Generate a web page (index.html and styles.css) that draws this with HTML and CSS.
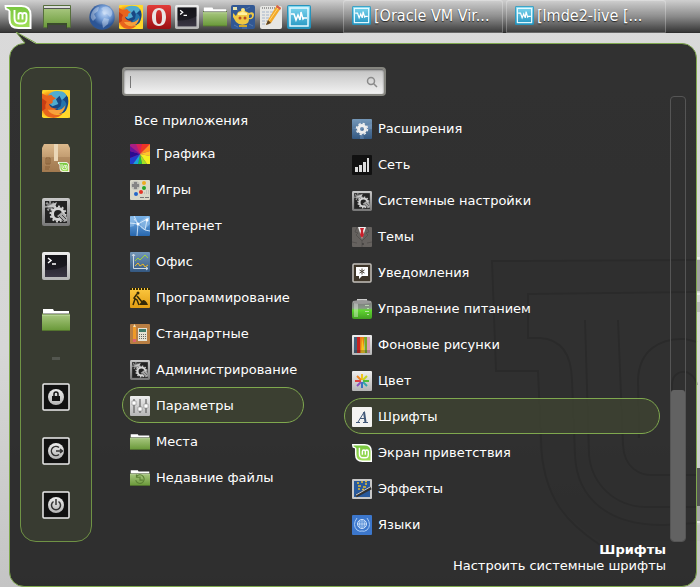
FILE: index.html
```html
<!DOCTYPE html>
<html lang="ru">
<head>
<meta charset="utf-8">
<title>Меню</title>
<link rel="stylesheet" href="styles.css">
</head>
<body>
<svg class="defs" width="0" height="0" aria-hidden="true">
  <defs>
    <linearGradient id="green" x2="0" y2="1"><stop stop-color="#a5c57c"/><stop offset="1" stop-color="#6b9a3b"/></linearGradient>
    <linearGradient id="silver" x2="0" y2="1"><stop stop-color="#eee"/><stop offset="1" stop-color="#b5b5b5"/></linearGradient>
    <linearGradient id="steel" x2="0" y2="1"><stop stop-color="#c8c8c8"/><stop offset="1" stop-color="#777"/></linearGradient>
    <linearGradient id="sky" x2="0" y2="1"><stop stop-color="#80d8f0"/><stop offset="1" stop-color="#2798c4"/></linearGradient>
    <linearGradient id="blue" x2="0" y2="1"><stop stop-color="#78b2e8"/><stop offset="1" stop-color="#2867ae"/></linearGradient>
    <linearGradient id="slate" x2="0" y2="1"><stop stop-color="#7497b8"/><stop offset="1" stop-color="#345881"/></linearGradient>
    <linearGradient id="red" x2="0" y2="1"><stop stop-color="#e23c39"/><stop offset="1" stop-color="#9c0f13"/></linearGradient>
    <linearGradient id="dark" x2="0" y2="1"><stop stop-color="#18181c"/><stop offset="1" stop-color="#3a3644"/></linearGradient>
    <linearGradient id="box" x2="0" y2="1"><stop stop-color="#dcb98c"/><stop offset="1" stop-color="#a67d52"/></linearGradient>
    <linearGradient id="amber" x2="0" y2="1"><stop stop-color="#fcc840"/><stop offset="1" stop-color="#e19c12"/></linearGradient>
    <linearGradient id="mintfill" x2="0" y2="1"><stop stop-color="#78c63f"/><stop offset="1" stop-color="#a2df58"/></linearGradient>
    <linearGradient id="battery" x2="0" y2="1"><stop stop-color="#777"/><stop offset=".4" stop-color="#8a988a"/><stop offset=".5" stop-color="#62d832"/><stop offset="1" stop-color="#419d22"/></linearGradient>
    <radialGradient id="ball" cx=".6" cy=".35"><stop stop-color="#c4daf7"/><stop offset=".5" stop-color="#7ba3da"/><stop offset="1" stop-color="#2c5595"/></radialGradient>
    <radialGradient id="flame" cx=".3" cy=".5"><stop stop-color="#ea5516"/><stop offset=".65" stop-color="#f48612"/><stop offset="1" stop-color="#ffd92b"/></radialGradient>

    <symbol id="mint" viewBox="0 0 27 24">
      <path d="M0 0H17Q27 0 27 10V24H14Q4 24 4 14V6Q3 5 1 5Q0 3 0 0Z" fill="#fff"/>
      <path d="M2 2H17Q25 2 25 10V22H14Q6 22 6 14V6Q5 4 2 3Z" fill="url(#mintfill)"/>
      <path d="M10 5V13Q10 18.500 15 18.500H18Q22 18.500 22 14V10Q22 8 20 8T18 10V14.500M18 10Q18 8 16 8T14 10V14.500" fill="none" stroke="#fff" stroke-width="1.900"/>
    </symbol>
    <symbol id="desktop" viewBox="0 0 30 24">
      <rect x="1" width="28" height="23" rx="1" fill="#566f3c"/><path d="M2 1H28V3H2Z" fill="#ddd"/><path d="M2 3H28V4H2Z" fill="#555"/>
      <path d="M2 4H28V22H2Z" fill="url(#green)"/><path d="M5 18H25V24H5Z" fill="#3a4c2c"/><path d="M6 20H24V24H6Z" fill="#444"/>
    </symbol>
    <symbol id="globe" viewBox="0 0 26 26">
      <circle cx="13" cy="13" r="12.700" fill="url(#ball)"/>
      <path d="M14 3Q20 1 23 7Q24 11 21 13L18 10L15 11Q12 8 14 6L12 5ZM3 8Q6 3 10 3L9 7L5 10L7 14L4 17Q0 13 3 8ZM15 14L20 15L19 20L14 24L13 18Z" fill="#e4eefb" opacity=".4"/>
    </symbol>
    <symbol id="firefox" viewBox="0 0 24 24">
      <rect width="24" height="24" rx="1.500" fill="url(#flame)"/>
      <circle cx="14" cy="11" r="9.500" fill="#194682"/>
      <path d="M5 5Q8 0 15 1Q20 1 21 5L17 9L15 5L12 8L14 12L9 14L5 11Z" fill="#50acd0"/>
      <path d="M17 8Q20 9 21 12Q20 18 16 19L13 16L16 14Z" fill="#2475ad"/>
      <path d="M0 3L4 5L8 4Q10 7 12 7L9 9Q10 12 6 12Q7 16 13 16Q8 19 5 16Q9 24 18 20Q13 26 5 23Q0 20 0 13Z" fill="#e8641d"/>
      <path d="M0 7L4 10Q2 13 3 16L0 18Z" fill="#c83d13"/><path d="M0 0H5L2 2ZM21 2Q25 12 19 20L24 24V0Z" fill="#ffd52a"/>
      <path d="M11 17Q17 18 20 13Q19 20 13 21Q7 21 5 17Z" fill="#f8a03c"/>
    </symbol>
    <symbol id="opera" viewBox="0 0 24 24">
      <rect width="24" height="24" rx="2" fill="url(#red)"/><path fill-rule="evenodd" d="M12 3C7 3 5 7 5 12S7 21 12 21S19 17 19 12S17 3 12 3ZM12 5C14.500 5 15 8 15 12S14.500 19 12 19S9 16 9 12S9.500 5 12 5Z" fill="#e9e4e4"/>
    </symbol>
    <symbol id="terminal" viewBox="0 0 28 28">
      <rect width="28" height="28" rx="2" fill="url(#silver)"/><rect x="3" y="3" width="22" height="22" fill="url(#dark)"/>
      <path d="M3 3H25V13Q17 18 3 18Z" fill="#111116" opacity=".6"/><path d="M6 6L9 8.500L6 11M10 12H14" fill="none" stroke="#fff" stroke-width="1.500"/>
    </symbol>
    <symbol id="folder" viewBox="0 0 28 28">
      <path d="M1 3H11L12 5H27V10H1Z" fill="#fff"/><path d="M0 7H28V25H0Z" fill="#54742f"/><path d="M1 7H27V8H1Z" fill="#aaa"/><path d="M0 9H28V24H0Z" fill="url(#green)"/><path d="M0 9H28" stroke="#c4dda6"/>
    </symbol>
    <symbol id="recent" viewBox="0 0 28 28">
      <use href="#folder"/><path d="M9 12A6 6 0 1 1 8 17M9 9V13H13M14 12V17H18" fill="none" stroke="#5b8035" stroke-width="1.500"/>
    </symbol>
    <symbol id="teapot" viewBox="0 0 24 24">
      <rect width="24" height="24" rx="2" fill="#315894"/><path d="M2 3L7 5M15 4L19 2M3 20L7 22M18 19L22 21M11 23H16" stroke="#5478ad"/>
      <path d="M5 11L2 8V12L5 17Q9 21 15 19Q18 18 18 14Q23 15 23 9Q22 6 18 8L16 7Q12 4 7 7Z" fill="#efc844"/><path d="M18 10Q21 8 21 11Q21 13 18 13Z" fill="#315894"/>
      <path d="M2 2H6V5H2Z" fill="#e8e5b0"/><circle cx="12" cy="5" r="2" fill="#ffe880"/><path d="M7 8Q12 6 16 8V10H7Z" fill="#fff0a0"/>
      <circle cx="9" cy="13" r="1.500" fill="#b74b26"/><circle cx="14" cy="13" r="1.500" fill="#b74b26"/><path d="M8 20H16V22H8Z" fill="#d2a728"/>
    </symbol>
    <symbol id="editor" viewBox="0 0 24 24">
      <rect x="1" y="1" width="22" height="23" rx="2" fill="#e7e7e4"/><path d="M3 3H19" stroke="#555" stroke-dasharray="1 1"/>
      <path d="M3 7H16M3 10H14M3 13H15M3 16H12M3 19H10" stroke="#a5b4c9" stroke-dasharray="3 1"/>
      <path d="M7 20L9 15L18 0L22 3L12 18Z" fill="#f2a828"/><path d="M18 0L22 3L21 5L17 2Z" fill="#d45b50"/><path d="M7 20L9 15L12 18Z" fill="#5b4426"/><path d="M10 16L19 3" stroke="#ffd575"/>
    </symbol>
    <symbol id="vm" viewBox="0 0 24 24">
      <rect width="24" height="24" rx="2" fill="#2793bb"/><rect x="1" y="1" width="22" height="21" rx="1" fill="url(#sky)"/><rect x="3" y="3" width="18" height="18" fill="none" stroke="#e8faff" stroke-width="1.500"/>
      <path d="M4 9L7 9L9 15L11 10L13 15L14 7L16 14L17 13L20 13" fill="none" stroke="#fff" stroke-width="1.500"/>
    </symbol>
    <symbol id="package" viewBox="0 0 28 28">
      <path d="M2 0H26L28 4V28H0V4Z" fill="url(#box)"/><path d="M0 13H28V28H0Z" fill="#9a734a" opacity=".4"/><path d="M12 0H16V17H12Z" fill="#ead6b7"/>
      <path d="M4 14H8V20H4ZM6 15V20M3 23H8M3 25H7" stroke="#886039" fill="none"/><svg x="15" y="18" width="13" height="10"><use href="#mint"/></svg>
    </symbol>
    <symbol id="gears" viewBox="0 0 28 28">
      <rect width="28" height="28" rx="2" fill="url(#steel)"/><rect x="3" y="3" width="22" height="22" fill="#232323"/>
      <circle cx="8" cy="8" r="3" fill="#858585"/><circle cx="8" cy="8" r="4" fill="none" stroke="#999" stroke-width="2" stroke-dasharray="2 1.500"/><path d="M4 9L15 4L13 9Z" fill="#c4c4c4"/>
      <circle cx="16" cy="16" r="5.500" fill="none" stroke="#d4d4d4" stroke-width="3"/><circle cx="16" cy="16" r="7.500" fill="none" stroke="#d0d0d0" stroke-width="2" stroke-dasharray="2 1.900"/>
      <path d="M15 18L20 14L25 19V23L22 24Z" fill="#aaa"/><path d="M17 18L22 23M20 17L24 21" stroke="#444"/>
    </symbol>
    <symbol id="lock" viewBox="0 0 28 28">
      <rect x="1" y="1" width="26" height="26" rx="1" fill="#111" stroke="#ededed" stroke-width="1.500"/><circle cx="14" cy="14" r="8" fill="url(#silver)"/>
      <path d="M10 13H18V18H10Z" fill="#151515"/><path d="M12 13V11Q12 9 14 9T16 11V13" fill="none" stroke="#151515" stroke-width="1.500"/>
    </symbol>
    <symbol id="logout" viewBox="0 0 28 28">
      <rect x="1" y="1" width="26" height="26" rx="1" fill="#111" stroke="#ededed" stroke-width="1.500"/><circle cx="14" cy="14" r="8" fill="url(#silver)"/>
      <path d="M17 10.500A4.600 4.600 0 1 0 17 17.500M14 14H20M18 12L20.500 14L18 16" fill="none" stroke="#333" stroke-width="1.500"/>
    </symbol>
    <symbol id="power" viewBox="0 0 28 28">
      <rect x="1" y="1" width="26" height="26" rx="1" fill="#111" stroke="#ededed" stroke-width="1.500"/><circle cx="14" cy="14" r="8" fill="url(#silver)"/>
      <path d="M11.500 10.500A4.500 4.500 0 1 0 16.500 10.500M14 8V14" fill="none" stroke="#333" stroke-width="1.500"/>
    </symbol>
    <symbol id="graphics" viewBox="0 0 20 20">
      <rect width="20" height="20" rx="1" fill="#a91e83"/><path d="M10 10L6 0H14Z" fill="#d82058"/><path d="M10 10L12 0H20Z" fill="#ee3424"/><path d="M10 10L20 0V7Z" fill="#ff9020"/><path d="M10 10L20 7V12Z" fill="#ffc62b"/>
      <path d="M10 10L20 12V20H17Z" fill="#f4f020"/><path d="M10 10L17 20H12Z" fill="#a2e322"/><path d="M10 10L12 20H8Z" fill="#18c048"/><path d="M10 10L8 20H3Z" fill="#17a5da"/><path d="M10 10L3 20H0V14Z" fill="#203dcc"/><path d="M10 10L0 14V7Z" fill="#2a0b91"/><path d="M10 10L0 7V2Z" fill="#69149a"/>
    </symbol>
    <symbol id="games" viewBox="0 0 20 20">
      <rect width="20" height="20" rx="1" fill="#d9d8c9"/><circle cx="5.500" cy="5.500" r="4.500" fill="#c2c2b9"/><path d="M4 2H7V4H9V7H7V9H4V7H2V4H4Z" fill="#858585"/>
      <circle cx="14" cy="3" r="2" fill="#edac22"/><circle cx="14" cy="8" r="2" fill="#27a52a"/><circle cx="11" cy="12" r="2" fill="#e33527"/><circle cx="6" cy="14" r="2" fill="#2567c9"/><path d="M10 17.500H14M15 17.500H19" stroke="#777"/><path d="M14 13H19M16 11H19" stroke="#aaa" stroke-dasharray="1 1"/>
    </symbol>
    <symbol id="internet" viewBox="0 0 20 20">
      <rect width="20" height="20" rx="1" fill="url(#blue)"/><path d="M0 0L6 2L4 10L0 11ZM10 5L18 0L20 8L14 14L11 12Z" fill="#a8cdef" opacity=".5"/>
      <path d="M0 7L8 8L19 2M4 0L8 8L7 20M8 8L15 14L20 15M15 14L17 4M4 3L8 8" fill="none" stroke="#e5f2ff" stroke-width=".8"/><circle cx="8" cy="8" r="1.500" fill="#fff"/><circle cx="17" cy="4" r="1.500" fill="#fff"/>
    </symbol>
    <symbol id="office" viewBox="0 0 20 20">
      <rect width="20" height="20" rx="1" fill="url(#slate)"/><path d="M3.500 2V16.500H18M2 4L3.500 2L5 4M16 15L18 16.500L16 18" fill="none" stroke="#cdd8e3"/>
      <path d="M5 9L8 6L10 8L15 3L18 6" fill="none" stroke="#9fd33e"/><path d="M5 14L8 11L10 14L13 12L15 15L18 13" fill="none" stroke="#f0ba22"/>
    </symbol>
    <symbol id="develop" viewBox="0 0 20 20">
      <rect width="20" height="20" rx="1" fill="url(#amber)"/><path d="M0 1H20" stroke="#332800" stroke-width="2" stroke-dasharray="2 1"/><circle cx="8" cy="5" r="1.500" fill="#332908"/>
      <path d="M7 6L4 10L7 12L9 17M5 11L3 17M7 8L12 14" fill="none" stroke="#332908" stroke-width="1.500"/><path d="M9 17Q11 14 13 12Q16 12 18 17Z" fill="#332908"/>
    </symbol>
    <symbol id="accessories" viewBox="0 0 20 20">
      <rect width="20" height="20" rx="1" fill="#b87e43"/><path d="M3 3H6V15H3Z" fill="#f09a27"/><path d="M3 3L4.500 0L6 3Z" fill="#f5dfae"/><path d="M3 15H6V18H3Z" fill="#dc6370"/><path d="M8 4H17V17H8Z" fill="#e5e2d5"/><path d="M9 5H16V8H9Z" fill="#427b6a"/>
      <path d="M9 10.500H16M9 12.500H16M9 14.500H16" stroke="#666" stroke-dasharray="1 1"/>
    </symbol>
    <symbol id="sliders" viewBox="0 0 20 20">
      <rect width="20" height="20" rx="1" fill="url(#silver)"/><path d="M4 3V17M10 3V17M16 3V17" stroke="#4c4c4c"/><path d="M2 5H6V9H2ZM8 11H12V15H8ZM14 8H18V12H14Z" fill="#fff" stroke="#777" stroke-width=".5"/>
    </symbol>
    <symbol id="cog" viewBox="0 0 20 20">
      <rect width="20" height="20" rx="1" fill="url(#slate)"/><path d="M0 10L20 5V10ZM8 0L12 20H8Z" fill="#91b4db" opacity=".3"/><circle cx="10" cy="10" r="3.500" fill="none" stroke="#eee" stroke-width="3"/><circle cx="10" cy="10" r="5.500" fill="none" stroke="#eee" stroke-width="1.500" stroke-dasharray="2.300 2.020"/>
    </symbol>
    <symbol id="network" viewBox="0 0 20 20"><rect width="20" height="20" rx="1" fill="#111"/><path d="M3 12H6V17H3ZM7 10H10V17H7ZM11 7H14V17H11ZM15 3H17V17H15Z" fill="#ddd"/></symbol>
    <symbol id="suit" viewBox="0 0 20 20">
      <rect width="20" height="20" rx="1" fill="#66625f"/><path d="M6 0H14L10 12Z" fill="#eee"/><path d="M8 1H12L11 4L12 8L10 11L8 8L9 4Z" fill="#c9202b"/><path d="M5 0L3 5L6 6L4 8L10 14L16 8L14 6L17 5L15 0M10 14V20M0 15L5 16M15 16L20 15" fill="none" stroke="#514e4b" stroke-width=".8"/><circle cx="11" cy="17" r=".7" fill="#222"/>
    </symbol>
    <symbol id="notify" viewBox="0 0 20 20">
      <rect x="1" y="1" width="18" height="18" rx="1" fill="#3e3528" stroke="#c3c0ba" stroke-width="1.500"/><path d="M4 4H16V13H10L7 16V13H4Z" fill="#fff"/><path d="M10 5.500V11.500M7.500 7L12.500 10M12.500 7L7.500 10" stroke="#4a4134"/>
    </symbol>
    <symbol id="energy" viewBox="0 0 20 20">
      <path d="M5 0H15V3H5Z" fill="#ccc"/><rect y="2" width="20" height="18" rx="2" fill="url(#battery)"/><path d="M2 3H6V18H2Z" fill="#fff" opacity=".35"/><path d="M13 6.500H17M15 9.500H17M13 12.500H17M15 15.500H17" stroke="#c8e9bd" stroke-width=".8"/><path d="M1 2Q10 0 19 2V4Q10 6 1 4Z" fill="#999"/>
    </symbol>
    <symbol id="wallpapers" viewBox="0 0 20 20">
      <rect width="20" height="20" rx="1" fill="url(#silver)"/><path d="M2 2H5V18H2Z" fill="#45607a"/><path d="M5 2H8V18H5Z" fill="#c72320"/><path d="M8 2H12V18H8Z" fill="#eb7b17"/><path d="M10 2L13 18H9Z" fill="#f5c51c"/><path d="M12 2H15V18H13Z" fill="#77a925"/><path d="M15 2H18V18H15Z" fill="#d9a1b5"/><path d="M2 15H18V18H2Z" fill="#222" opacity=".25"/>
    </symbol>
    <symbol id="color" viewBox="0 0 20 20">
      <rect width="20" height="20" rx="1" fill="url(#silver)"/><g stroke-width="2"><path d="M10 9V3" stroke="#f0c51b"/><path d="M11 9L15 5" stroke="#c2d51e"/><path d="M11 10H17" stroke="#55bd36"/><path d="M11 11L15 15" stroke="#32a5aa"/><path d="M10 11V17" stroke="#3974c0"/><path d="M9 11L5 15" stroke="#8852bd"/><path d="M9 10H3" stroke="#dd4040"/><path d="M9 9L5 5" stroke="#ef8421"/></g>
    </symbol>
    <symbol id="fonts" viewBox="0 0 20 20"><rect width="20" height="20" rx="1" fill="#f3f3f1"/><path d="M4 15.500H8M11 15.500H16M6 15L12.500 4.500M8 11.500H13" fill="none" stroke="#405878"/><path d="M12 5L13.500 15" stroke="#405878" stroke-width="2"/></symbol>
    <symbol id="effects" viewBox="0 0 20 20">
      <rect width="20" height="20" rx="1" fill="#c8c8c8"/><path d="M2 2H18V18H2Z" fill="#28599c"/><path d="M5 4H7M9 3H11M13 5H15M6 7H9M11 8H14M6 10H8M10 10.500H12M13 2.500H15" stroke="#e3bc31" stroke-width="1.500"/><path d="M4 17L19 9" stroke="#333" stroke-width="3"/><path d="M4 16L18 8" stroke="#ccc"/>
    </symbol>
    <symbol id="languages" viewBox="0 0 20 20">
      <rect width="20" height="20" rx="1" fill="#3c77cc"/><circle cx="10" cy="9" r="4.500" fill="#4f89d4" stroke="#d6e7fc"/><path d="M6 9H14M10 5V13M8 6Q7 9 8 12M12 6Q13 9 12 12" fill="none" stroke="#d6e7fc" stroke-width=".7"/><path d="M5 3Q0 10 5 15Q8 17 10 16M15 3Q20 10 15 15Q12 17 10 16" fill="none" stroke="#a9ccf6"/>
    </symbol>
  </defs>
</svg>

<svg class="wallpaper" viewBox="0 0 220 347" aria-hidden="true">
  <path d="M217 20H220V51H217Z" fill="#9a9a9a"/><path d="M217 62H220V72H217Z" fill="#bbb"/><path d="M217 228H220V266H217Z" fill="#575757"/><path d="M217 266H220V281H217Z" fill="#aaa"/>
  <path d="M12 21L220 20V52L48 54V98H65Q92 100 92 140L95 220C98 260 130 286 180 285H220V301H120C80 275 62 250 60 210L58 131H16Z" fill="#b8b8b8" opacity=".35"/>
  <g fill="none" stroke="#989898" stroke-width="2">
    <path d="M217 20L12 21L16 131H58L61 200C62 260 90 285 120 305"/>
    <path d="M217 52L48 54V98H60Q91 100 92 140L95 215C97 260 130 286 185 285L217 283"/>
    <path d="M105 80L109 215C112 245 135 266 165 267H217"/><path d="M138 80L143 205C144 228 160 236 175 235H217"/>
    <path d="M159 198L158 140C159 110 180 98 205 99L217 102"/><path d="M192 197V145C192 128 213 127 217 145"/>
  </g>
  <path d="M217 18H220M217 54H220M217 282H220" stroke="#fff"/>
</svg>

<header class="panel">
  <button class="launch launch-menu" aria-label="Меню"><svg><use href="#mint"/></svg></button>
  <button class="launch launch-desktop" aria-label="Рабочий стол"><svg><use href="#desktop"/></svg></button>
  <nav class="launchers">
    <button class="launch launch-globe" aria-label="Браузер"><svg><use href="#globe"/></svg></button>
    <button class="launch" aria-label="Firefox"><svg><use href="#firefox"/></svg></button>
    <button class="launch" aria-label="Opera"><svg><use href="#opera"/></svg></button>
    <button class="launch" aria-label="Терминал"><svg><use href="#terminal"/></svg></button>
    <button class="launch" aria-label="Файлы"><svg><use href="#folder"/></svg></button>
    <button class="launch" aria-label="Чайник"><svg><use href="#teapot"/></svg></button>
    <button class="launch" aria-label="Редактор"><svg><use href="#editor"/></svg></button>
    <button class="launch" aria-label="Монитор"><svg><use href="#vm"/></svg></button>
  </nav>
  <div class="tasks">
    <button class="task"><svg><use href="#vm"/></svg><span>[Oracle VM Vir...</span></button>
    <button class="task"><svg><use href="#vm"/></svg><span>[lmde2-live [...</span></button>
  </div>
</header>

<main class="menu">
  <svg class="tail" viewBox="0 0 24 12" aria-hidden="true"><path d="M10 12L1 0L21 12Z" fill="#303030"/><path d="M10 11L1 0L21 11" fill="none" stroke="#7fa84e"/></svg>
  <div class="content">
    <nav class="favorites">
      <button aria-label="Firefox"><svg><use href="#firefox"/></svg></button>
      <button aria-label="Менеджер программ"><svg><use href="#package"/></svg></button>
      <button aria-label="Системные настройки"><svg><use href="#gears"/></svg></button>
      <button aria-label="Терминал"><svg><use href="#terminal"/></svg></button>
      <button aria-label="Файлы"><svg><use href="#folder"/></svg></button>
      <hr>
      <button aria-label="Заблокировать"><svg><use href="#lock"/></svg></button>
      <button aria-label="Завершить сеанс"><svg><use href="#logout"/></svg></button>
      <button aria-label="Выключить"><svg><use href="#power"/></svg></button>
    </nav>
    <div class="browser">
      <label class="search">
        <input type="text" aria-label="Поиск">
        <svg viewBox="0 0 12 12" aria-hidden="true"><circle cx="5" cy="5" r="3.500"/><path d="M7.500 7.500L11 11"/></svg>
      </label>
      <div class="lists">
        <nav class="categories">
          <button class="all">Все приложения</button>
          <button class="item"><svg><use href="#graphics"/></svg>Графика</button>
          <button class="item"><svg><use href="#games"/></svg>Игры</button>
          <button class="item"><svg><use href="#internet"/></svg>Интернет</button>
          <button class="item"><svg><use href="#office"/></svg>Офис</button>
          <button class="item"><svg><use href="#develop"/></svg>Программирование</button>
          <button class="item"><svg><use href="#accessories"/></svg>Стандартные</button>
          <button class="item"><svg><use href="#gears"/></svg>Администрирование</button>
          <button class="item selected"><svg><use href="#sliders"/></svg>Параметры</button>
          <button class="item"><svg><use href="#folder"/></svg>Места</button>
          <button class="item"><svg><use href="#recent"/></svg>Недавние файлы</button>
        </nav>
        <nav class="apps">
          <button class="item"><svg><use href="#cog"/></svg>Расширения</button>
          <button class="item"><svg><use href="#network"/></svg>Сеть</button>
          <button class="item"><svg><use href="#gears"/></svg>Системные настройки</button>
          <button class="item"><svg><use href="#suit"/></svg>Темы</button>
          <button class="item"><svg><use href="#notify"/></svg>Уведомления</button>
          <button class="item"><svg><use href="#energy"/></svg>Управление питанием</button>
          <button class="item"><svg><use href="#wallpapers"/></svg>Фоновые рисунки</button>
          <button class="item"><svg><use href="#color"/></svg>Цвет</button>
          <button class="item selected"><svg><use href="#fonts"/></svg>Шрифты</button>
          <button class="item"><svg><use href="#mint"/></svg>Экран приветствия</button>
          <button class="item"><svg><use href="#effects"/></svg>Эффекты</button>
          <button class="item"><svg><use href="#languages"/></svg>Языки</button>
        </nav>
        <div class="scrollbar"><div class="thumb"></div></div>
      </div>
    </div>
  </div>
  <footer class="description"><strong>Шрифты</strong><span>Настроить системные шрифты</span></footer>
</main>
</body>
</html>
```
FILE: styles.css
```css
* { box-sizing: border-box; }

body {
  margin: 0;
  min-height: 100vh;
  background: linear-gradient(#dadada, #d6d6d6 60%, #c4c4c4);
  color: #fff;
  font: 13px/16px "DejaVu Sans", sans-serif;
}

button {
  display: flex;
  align-items: center;
  padding: 0;
  border: 0;
  background: none;
  color: inherit;
  font: inherit;
  text-align: left;
  white-space: nowrap;
}

svg { display: block; flex: none; }
.defs { position: absolute; }

.wallpaper {
  position: absolute;
  top: 240px;
  right: 0;
  width: 220px;
  height: 347px;
}

.panel {
  position: relative;
  display: flex;
  align-items: center;
  height: 33px;
  padding-left: 4px;
  background: linear-gradient(#cfcfcf, #8a8a8a 50%, #363636 97%, #292929);
}

.launch svg { width: 24px; height: 24px; }
.launch-menu svg { width: 28px; height: 24px; }
.launch-desktop { margin: 0 17px 0 10px; }
.launch-desktop svg { width: 30px; height: 24px; }
.launch-globe svg { width: 26px; height: 26px; }
.launchers { display: flex; align-items: center; gap: 4px; }

.tasks { display: flex; gap: 3px; margin-left: 32px; }

.task {
  gap: 3px;
  width: 160px;
  height: 33px;
  padding: 0 0 2px 8px;
  border: 1px solid rgba(255, 255, 255, 0.25);
  border-radius: 3px 3px 0 0;
  background: rgba(255, 255, 255, 0.04);
  font: 16px/20px "DejaVu Sans Condensed", "DejaVu Sans", sans-serif;
  text-shadow: 0 1px 1px #222;
}

.task svg { width: 19px; height: 19px; }

.menu {
  position: relative;
  margin: 10px 3px 0 9px;
  padding: 23px 10px 12px;
  border: 1px solid #7fa84e;
  border-radius: 15px;
  background: rgba(30, 30, 30, 0.9);
}

.tail {
  position: absolute;
  top: -12px;
  left: 5px;
  width: 24px;
  height: 12px;
}

.content { display: flex; gap: 30px; }

.favorites {
  display: flex;
  flex-direction: column;
  align-items: center;
  gap: 26px;
  width: 72px;
  padding: 22px 0;
  border: 1px solid #6f9245;
  border-radius: 16px;
  background: #383b31;
}

.favorites svg { width: 28px; height: 28px; }
.favorites hr { width: 8px; height: 3px; margin: -3px 0; border: 0; background: #53564f; }

.browser {
  display: flex;
  flex: 1;
  flex-direction: column;
}

.search {
  display: flex;
  align-items: center;
  width: 264px;
  height: 29px;
  padding: 0 6px;
  border: 2px solid #85857f;
  border-radius: 4px;
  background: linear-gradient(#c2c2c2, #f2f2f2);
  box-shadow: inset 0 1px 2px #555;
}

.search input {
  flex: 1;
  min-width: 0;
  height: 12px;
  padding: 0 4px;
  border: 0;
  border-left: 1px solid #777;
  outline: 0;
  background: none;
  font: inherit;
}

.search svg { width: 12px; height: 12px; fill: none; stroke: #8a8a8a; stroke-width: 1.5; }

.lists { display: flex; flex: 1; }
.categories { width: 182px; margin-right: 40px; padding-top: 10px; }
.apps { flex: 1; padding-top: 14px; }

.all { height: 29px; padding-left: 12px; }

.item {
  gap: 6px;
  width: 100%;
  height: 36px;
  padding: 2px 0 0 7px;
  border: 1px solid transparent;
  border-radius: 18px;
}

.item svg { width: 20px; height: 20px; }
.selected { border-color: #7fa84e; background: rgba(62, 68, 50, 0.8); }

.scrollbar {
  display: flex;
  flex-direction: column;
  justify-content: flex-end;
  width: 16px;
  margin-left: 10px;
  border: 1px solid #555;
  border-radius: 4px;
}

.thumb { height: 34%; border-radius: 3px; background: #626262; }

.description {
  display: flex;
  flex-direction: column;
  align-items: flex-end;
  padding-right: 20px;
}
```
